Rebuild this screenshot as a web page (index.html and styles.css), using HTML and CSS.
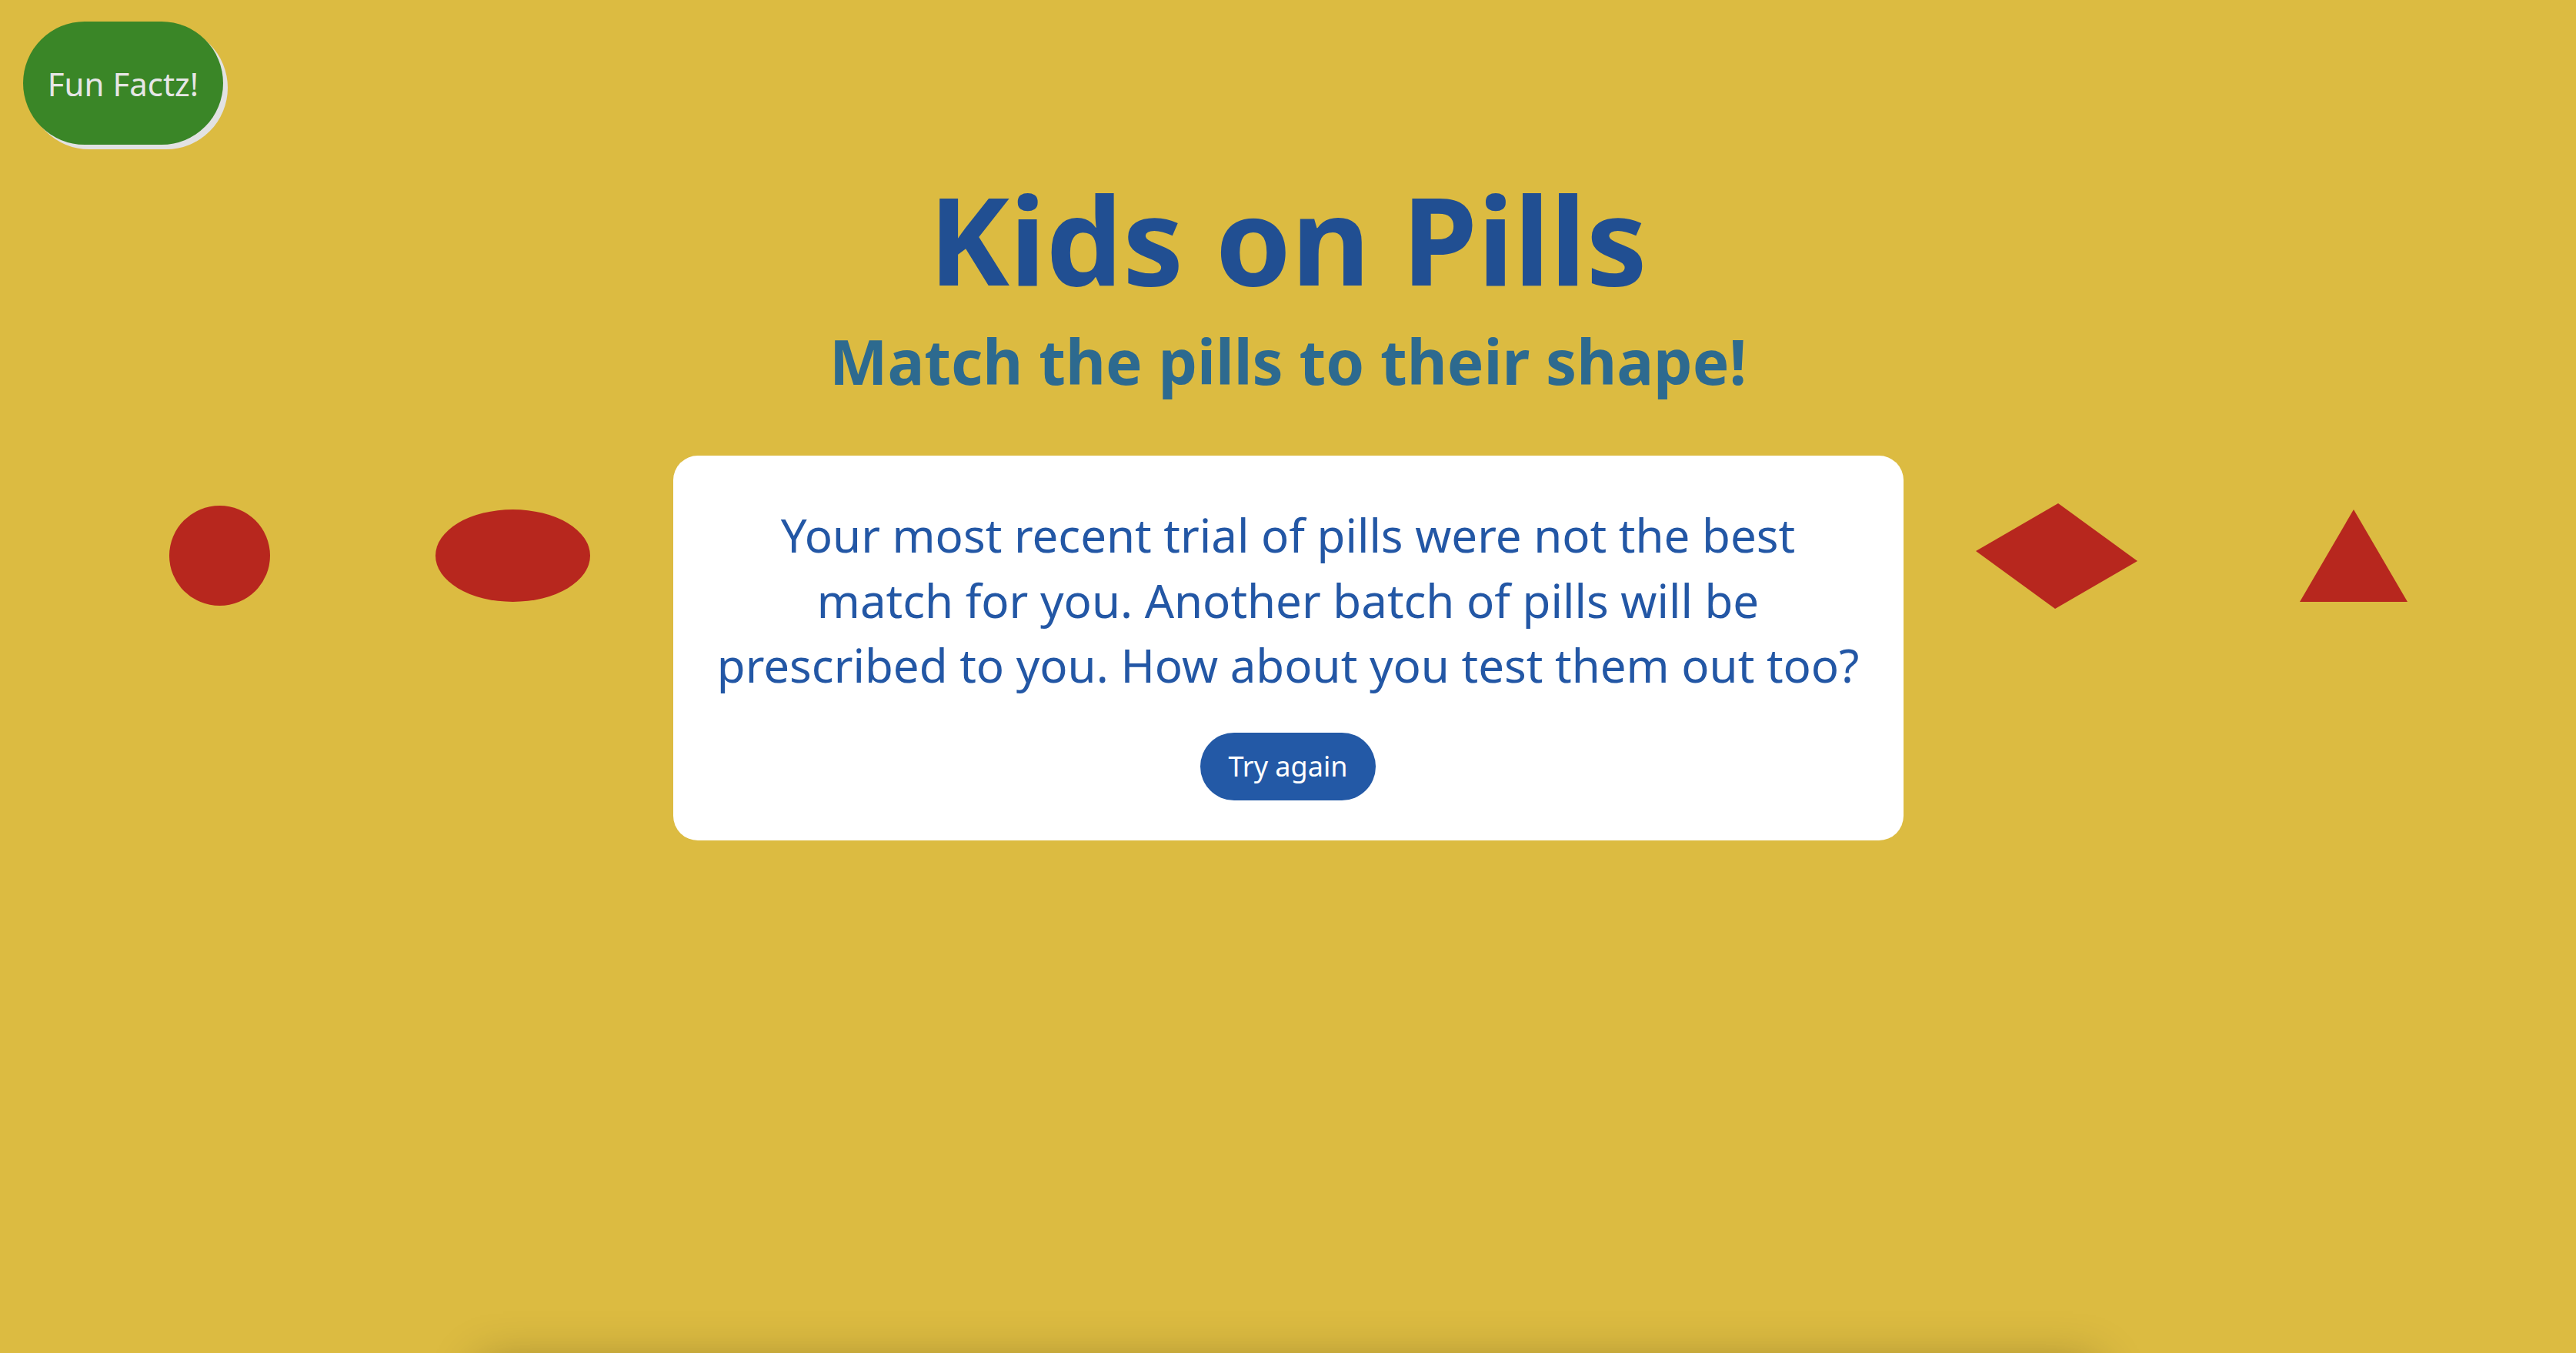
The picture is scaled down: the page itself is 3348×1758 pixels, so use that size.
FILE: index.html
```html
<!DOCTYPE html>
<html lang="en">
<head>
<meta charset="utf-8">
<title>Kids on Pills</title>
<link rel="stylesheet" href="styles.css">
</head>
<body>
<button class="fun-btn">Fun Factz!</button>
<main class="page">
  <h1 class="title">Kids on Pills</h1>
  <h2 class="subtitle">Match the pills to their shape!</h2>
  <div class="row">
    <div class="side side-left">
      <div class="pill pill-circle"></div>
      <div class="pill pill-oval"></div>
    </div>
    <div class="card">
      <p class="message">Your most recent trial of pills were not the best<br>match for you. Another batch of pills will be<br>prescribed to you. How about you test them out too?</p>
      <button class="retry-btn">Try again</button>
    </div>
    <div class="side side-right">
      <svg class="pill-diamond" width="210" height="137" viewBox="0 0 210 137"><polygon points="107,0 210,75 103,137 0,62" fill="#b7271e"/></svg>
      <svg class="pill-triangle" width="140" height="120" viewBox="0 0 140 120"><polygon points="70,0 140,120 0,120" fill="#b7271e"/></svg>
    </div>
  </div>
  <div class="board"></div>
</main>
</body>
</html>
```

FILE: styles.css
```css
html, body {
  margin: 0;
  height: 100%;
  overflow: hidden;
}
body {
  background: #dcbb41;
  font-family: "Comic Sans MS", "Noto Sans", sans-serif;
  position: relative;
}
.fun-btn {
  position: absolute;
  left: 30px;
  top: 28px;
  width: 260px;
  height: 160px;
  border: none;
  border-radius: 80px;
  background: #3a8627;
  color: #e6e6e6;
  font-family: inherit;
  font-size: 42px;
  box-shadow: 6px 6px 0 #e2e2e2;
  padding: 0;
}
.page {
  padding-top: 210px;
  text-align: center;
}
.title {
  margin: 0;
  font-size: 158px;
  line-height: 200px;
  font-weight: 700;
  color: #214f92;
}
.subtitle {
  margin: 9px 0 0;
  font-size: 80px;
  line-height: 100px;
  font-weight: 700;
  color: #2d6a8f;
}
.row {
  margin-top: 73px;
  display: flex;
  justify-content: center;
  align-items: flex-start;
}
.side {
  height: 260px;
  display: flex;
  align-items: center;
  justify-content: space-between;
}
.side-left {
  width: 547px;
  margin-right: 108px;
}
.side-right {
  width: 561px;
  margin-left: 94px;
}
.pill {
  background: #b7271e;
  border-radius: 50%;
}
.pill-circle {
  width: 131px;
  height: 130px;
}
.pill-oval {
  width: 201px;
  height: 120px;
}
.card {
  width: 1599px;
  box-sizing: border-box;
  background: #ffffff;
  border-radius: 32px;
  padding: 61px 16px 52px;
  text-align: center;
}
.message {
  margin: 0;
  font-size: 60px;
  line-height: 84.5px;
  color: #2357a5;
  white-space: nowrap;
}
.retry-btn {
  display: block;
  margin: 45px auto 0;
  height: 88px;
  width: 228px;
  border: none;
  border-radius: 44px;
  background: #2359a6;
  color: #ffffff;
  font-family: inherit;
  font-size: 36px;
  padding: 0;
}
.board {
  width: 2100px;
  height: 300px;
  margin: 680px auto 0;
  background: #dcbb41;
  box-shadow: 0 0 60px rgba(0, 0, 0, 0.3);
}
```
